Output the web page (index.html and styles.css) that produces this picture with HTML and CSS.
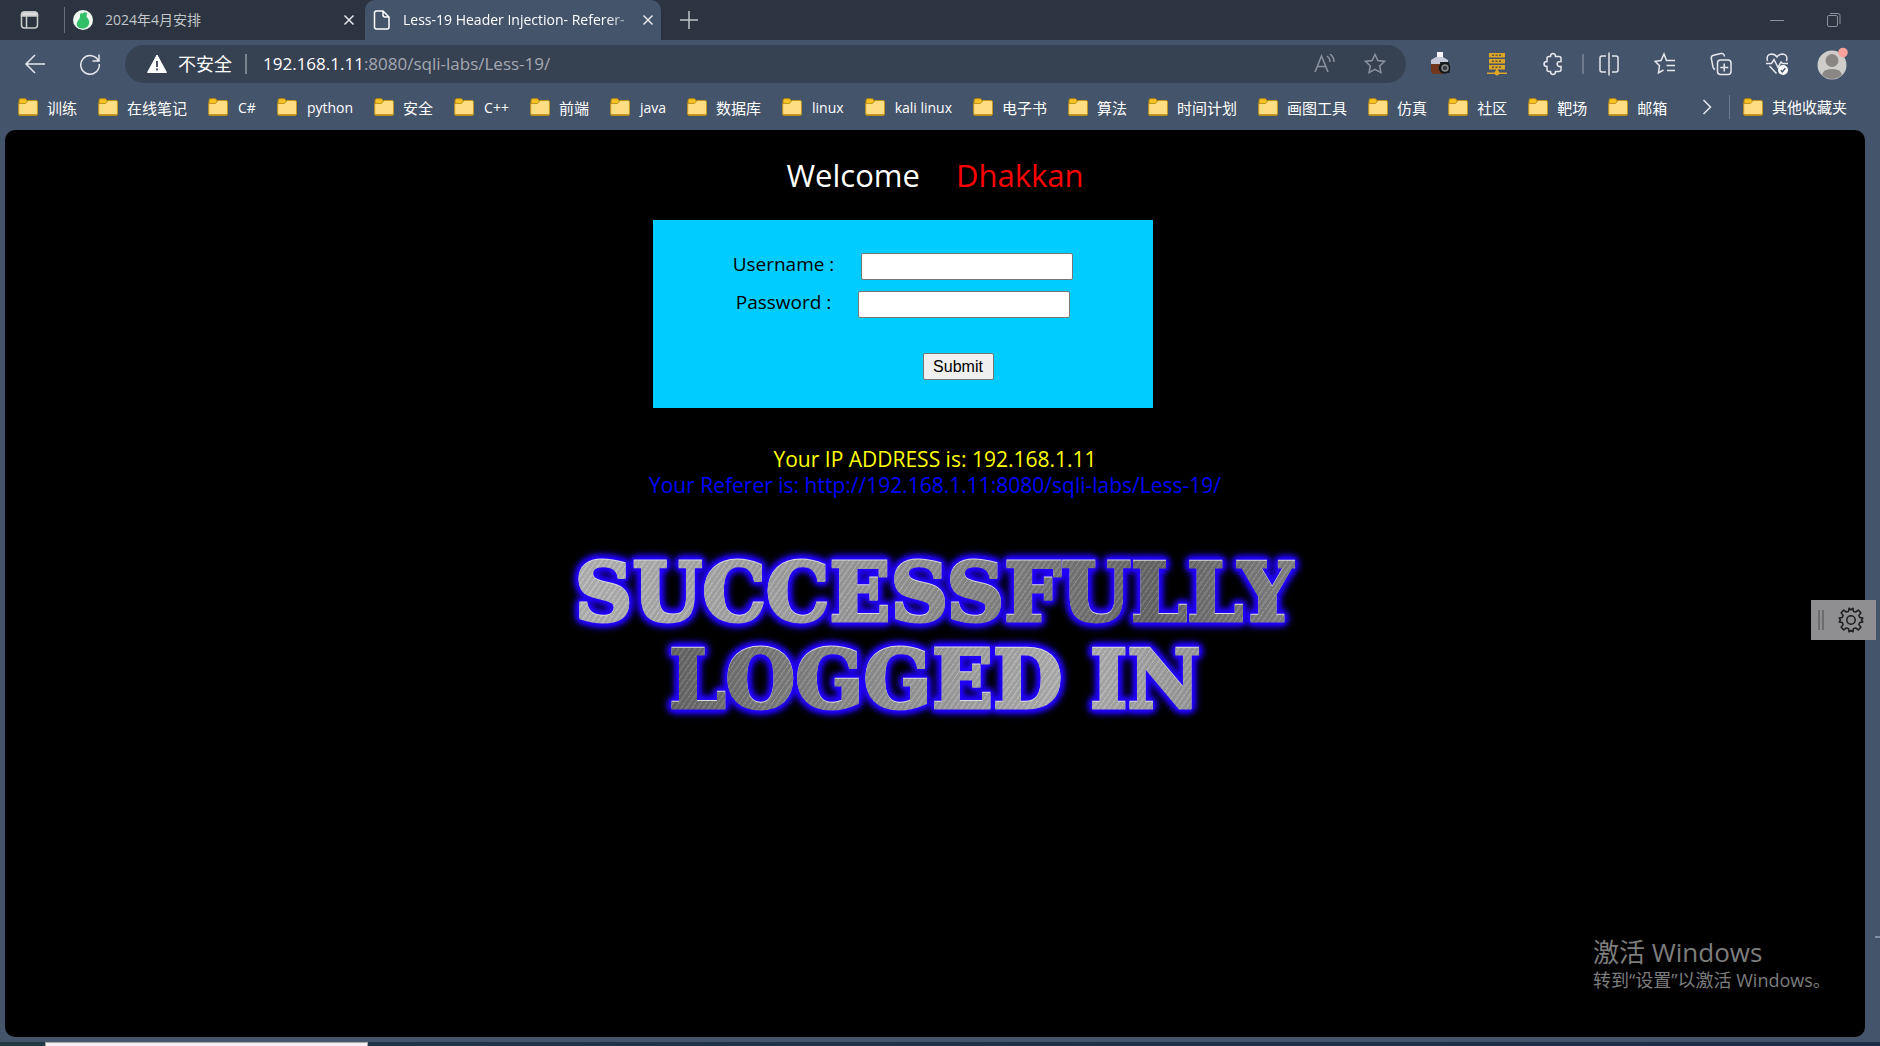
FILE: index.html
```html
<!DOCTYPE html>
<html lang="zh-CN">
<head>
<meta charset="utf-8">
<title>Less-19 Header Injection- Referer-</title>
<link rel="stylesheet" href="styles.css">
</head>
<body>
<svg class="defs" width="0" height="0" aria-hidden="true">
  <symbol id="folder" viewBox="0 0 20 18">
    <path d="M1 2.500Q1 .7 2.500 .7H7.500L9.500 3V7H1z" fill="#f5c326" stroke="#b8860b"/>
    <path d="M.7 5.500H7.500L10 2.500H18Q19.500 2.500 19.500 4V16Q19.500 17.300 18 17.300H2Q.7 17.300 .7 16z" fill="#ffdd83" stroke="#c2951f"/>
    <path d="M1 16.900H19" stroke="#b98a12" stroke-width="1.400"/>
  </symbol>
  <symbol id="cross" viewBox="0 0 12 12"><path d="M1.500 1.500l9 9M10.500 1.500l-9 9"/></symbol>
</svg>

<header class="browser">
  <div class="tabs">
    <button class="icon tab-menu" aria-label="标签页操作"><svg width="20" height="20" viewBox="0 0 20 20"><rect x="1.500" y="2" width="16" height="16" rx="3"/><path d="M1.500 6V5q0-3 3-3h10q3 0 3 3v1z" fill="#ddd"/><path d="M6.500 6v12"/></svg></button>
    <div class="tab">
      <svg class="favicon" width="20" height="20" viewBox="0 0 20 20"><circle cx="10" cy="10" r="10" fill="#eefaf0"/><path d="M7 4.500q0-2 3-1 1-2 4-.5l-.5 4q3.500 3 2.500 7-1 3-5 4.500-5 .5-7-2.500-1-3 1-5.500 2.500-2 2-6z" fill="#32bf68"/></svg>
      <span class="tab-title">2024年4月安排</span>
      <button class="icon" aria-label="关闭"><svg width="12" height="12"><use href="#cross"/></svg></button>
    </div>
    <div class="tab active">
      <svg class="favicon line" width="18" height="20" viewBox="0 0 18 20"><path d="M1.500 3q0-2 2-2H10l6 6v10q0 2-2 2H3.500q-2 0-2-2zM10 1v4q0 2 2 2h4"/></svg>
      <span class="tab-title fade">Less-19 Header Injection- Referer-</span>
      <button class="icon" aria-label="关闭"><svg width="12" height="12"><use href="#cross"/></svg></button>
    </div>
    <button class="icon new-tab" aria-label="新建标签页"><svg width="18" height="18" viewBox="0 0 18 18"><path d="M9 0v18M0 9h18"/></svg></button>
    <div class="window-controls">
      <button class="icon" aria-label="最小化"><svg width="14" height="14" viewBox="0 0 14 14"><path d="M0 7.500h14"/></svg></button>
      <button class="icon" aria-label="还原"><svg width="14" height="14" viewBox="0 0 14 14"><rect x=".5" y="2.500" width="10" height="11" rx="1.500"/><path d="M3 .5h8q2 0 2 2V11"/></svg></button>
    </div>
  </div>

  <div class="toolbar">
    <button class="icon back" aria-label="返回"><svg width="22" height="20" viewBox="0 0 22 20"><path d="M11 1L2 10l9 9M2 10h19"/></svg></button>
    <button class="icon reload" aria-label="刷新"><svg width="22" height="22" viewBox="0 0 22 22"><path d="M19.500 8A9.300 9.300 0 1 0 20.300 11M20 1.500V8h-6.500"/></svg></button>
    <div class="address">
      <svg width="20" height="20" viewBox="0 0 20 20"><path d="M10 1L19.500 18.500H.5z" fill="#fff" stroke="#fff" stroke-linejoin="round"/><path d="M10 7v6M10 14.500v2" stroke="#364152" stroke-width="1.800"/></svg>
      <span class="insecure">不安全</span>
      <span class="url"><b>192.168.1.11</b>:8080/sqli-labs/Less-19/</span>
      <button class="icon dim" aria-label="大声朗读"><svg width="22" height="20" viewBox="0 0 22 20"><path d="M1 18L7.500 2 14 18M3.500 12.500h8M13 2q3 2 3 6M16 0q4 3 4 8"/></svg></button>
      <button class="icon dim" aria-label="收藏"><svg width="22" height="22" viewBox="0 0 22 22"><path d="M11 1.500l2.900 6 6.600.9-4.800 4.600 1.200 6.600-5.900-3.200-5.900 3.200L6.300 13 1.500 8.400l6.600-.9z"/></svg></button>
    </div>
    <nav class="tools">
      <button class="icon" aria-label="截图"><svg class="solid" width="22" height="24" viewBox="0 0 22 24"><path d="M7 0h6v6H7z" fill="#f4f4fa"/><path d="M1 8l5-3h7l5 3v5H1z" fill="#c6c8d8"/><path d="M1 12h12v10H3l-2-2z" fill="#70371e"/><path d="M10 10h9l1 11h-9z" fill="#20242b"/><circle cx="14.500" cy="16" r="5.800" fill="#14171c"/><circle cx="15" cy="16" r="3" fill="#343b44" stroke="#8a8a8a"/></svg></button>
      <button class="icon" aria-label="代理"><svg class="solid" width="22" height="24" viewBox="0 0 22 24"><path d="M3 1h16v4.500H3zM3 7h16v4.500H3zM3 13h16v4.500H3zM10 17h2v3h-2zM1 20.500h20V22H1z" fill="#d9a528"/><path d="M6 3.200h9M6 9.200h9M6 15.200h9" stroke="#5b5540" stroke-dasharray="2 1.500"/><circle cx="11" cy="21" r="2.400" fill="#e0a823"/></svg></button>
      <button class="icon" aria-label="扩展"><svg width="22" height="24" viewBox="0 0 22 24"><path d="M7 4.500h1.500Q8.500 1.500 11 1.500t2.500 3H17q2 0 2 2v3q-3.800-.3-3.800 2.500T19 14.500v3q0 2-2 2h-3.500q0 3-2.500 3t-2.500-3H7q-2 0-2-2v-3Q2 14.500 2 12t3-2.500v-3q0-2 2-2z"/></svg></button>
      <button class="icon split" aria-label="分屏"><svg width="22" height="24" viewBox="0 0 22 24"><path d="M8 4H4Q2 4 2 6v12q0 2 2 2h4M14 4h4q2 0 2 2v12q0 2-2 2h-4M11 .5v23"/></svg></button>
      <button class="icon" aria-label="收藏夹"><svg width="22" height="24" viewBox="0 0 22 24"><path d="M14 8.500h-1.500L10 2 7 8.500 1.200 9.300l4.300 4.500-1 7 5-2.800M14 8.500h7M12.500 13.500H21M13 18.500h8"/></svg></button>
      <button class="icon" aria-label="集锦"><svg width="22" height="24" viewBox="0 0 22 24"><rect x="7.500" y="8" width="13.500" height="14.500" rx="3"/><path d="M14.200 11.500v8M10.300 15.500h8M5 17.500q-1.500-.5-2-2.500L1.300 6.500Q1 4 3.500 3.300L11 1.500q3-.5 3.500 3"/></svg></button>
      <button class="icon" aria-label="浏览器概要"><svg width="22" height="24" viewBox="0 0 22 24"><path d="M1.500 9Q-.2 2.500 5.500 2 9 2 11 5q2-3 5.500-3Q22.200 2.500 20.500 9M3.500 14l7 7.500M0 11.500h5.500l2.500-4 4 8 3-5.500 1.500 1.500H22"/><circle cx="17" cy="18" r="5" fill="#fff" stroke="none"/><path d="M14.800 18.300l1.500 1.500 3-3.500" stroke="#44546a"/></svg></button>
      <button class="icon profile" aria-label="个人资料"><svg class="solid" width="32" height="36" viewBox="0 0 32 36"><circle cx="15" cy="19" r="14.500" fill="#cfcdca"/><circle cx="15" cy="14.500" r="6.500" fill="#898684"/><path d="M5 29q1-6 10-6t10 6q-10 8-20 0z" fill="#898684"/><circle cx="26" cy="6.500" r="4.800" fill="#f9a19b"/></svg></button>
    </nav>
  </div>

  <nav class="bookmarks">
    <a href="#"><svg width="20" height="20"><use href="#folder"/></svg>训练</a>
    <a href="#"><svg width="20" height="20"><use href="#folder"/></svg>在线笔记</a>
    <a class="latin" href="#"><svg width="20" height="20"><use href="#folder"/></svg>C#</a>
    <a class="latin" href="#"><svg width="20" height="20"><use href="#folder"/></svg>python</a>
    <a href="#"><svg width="20" height="20"><use href="#folder"/></svg>安全</a>
    <a class="latin" href="#"><svg width="20" height="20"><use href="#folder"/></svg>C++</a>
    <a href="#"><svg width="20" height="20"><use href="#folder"/></svg>前端</a>
    <a class="latin" href="#"><svg width="20" height="20"><use href="#folder"/></svg>java</a>
    <a href="#"><svg width="20" height="20"><use href="#folder"/></svg>数据库</a>
    <a class="latin" href="#"><svg width="20" height="20"><use href="#folder"/></svg>linux</a>
    <a class="latin" href="#"><svg width="20" height="20"><use href="#folder"/></svg>kali linux</a>
    <a href="#"><svg width="20" height="20"><use href="#folder"/></svg>电子书</a>
    <a href="#"><svg width="20" height="20"><use href="#folder"/></svg>算法</a>
    <a href="#"><svg width="20" height="20"><use href="#folder"/></svg>时间计划</a>
    <a href="#"><svg width="20" height="20"><use href="#folder"/></svg>画图工具</a>
    <a href="#"><svg width="20" height="20"><use href="#folder"/></svg>仿真</a>
    <a href="#"><svg width="20" height="20"><use href="#folder"/></svg>社区</a>
    <a href="#"><svg width="20" height="20"><use href="#folder"/></svg>靶场</a>
    <a href="#"><svg width="20" height="20"><use href="#folder"/></svg>邮箱</a>
    <button class="icon more" aria-label="更多"><svg width="10" height="16" viewBox="0 0 10 16"><path d="M1.500 1l7 7-7 7"/></svg></button>
    <a class="others" href="#"><svg width="20" height="20"><use href="#folder"/></svg>其他收藏夹</a>
  </nav>
</header>

<main class="page">
  <h1 class="welcome">Welcome <span>Dhakkan</span></h1>
  <form class="login">
    <div class="field"><label for="user">Username :</label><input id="user" type="text"></div>
    <div class="field"><label for="pass">Password :</label><input id="pass" type="password"></div>
    <button class="submit" type="button">Submit</button>
  </form>
  <p class="result"><span class="ip">Your IP ADDRESS is: 192.168.1.11</span><span class="referer">Your Referer is: http://192.168.1.11:8080/sqli-labs/Less-19/</span></p>
  <div class="banner"><span>SUCCESSFULLY</span><span>LOGGED IN</span></div>
</main>
<footer class="taskbar"><div class="task"></div></footer>

<button class="gear" aria-label="设置"><i class="grip"></i><svg width="26" height="26" viewBox="0 0 26 26"><path d="M10.600 4.200L11 1.200l2 1.600 2-1.600.4 3 2.200.9 2.600-2 2.700 2.700-2 2.600.9 2.200 3 .4-1.300 2 1.300 2-3 .4-.9 2.200 2 2.600-2.700 2.700-2.600-2-2.200.9-.4 3-2-1.500-2 1.500-.4-3-2.200-.9-2.600 2-2.700-2.700 2-2.600-.9-2.200-3-.4 1.300-2-1.300-2 3-.4.9-2.200-2-2.600 2.700-2.700 2.600 2z"/><circle cx="13" cy="13" r="4.200"/></svg></button>
<i class="edge-mark"></i>
<aside class="activate"><strong>激活 Windows</strong><span>转到“设置”以激活 Windows。</span></aside>
</body>
</html>
```
FILE: styles.css
```css
* { box-sizing: border-box; }

body {
  margin: 0;
  min-height: 100vh;
  position: relative;
  display: flex;
  flex-direction: column;
  background: #44546a;
  color: #fff;
  font-family: "Open Sans", "Noto Sans CJK SC", sans-serif;
  overflow-x: hidden;
}

.defs { position: absolute; }
svg { flex: none; display: block; }

.icon {
  display: flex;
  align-items: center;
  justify-content: center;
  flex: none;
  padding: 0;
  border: 0;
  background: none;
  color: #e6e8ec;
}
.icon svg, .line { fill: none; stroke: currentColor; stroke-width: 1.5; }
.icon svg.solid { stroke: none; }

/* Tab strip */
.tabs {
  display: flex;
  height: 40px;
  background: #2b3440;
  font-size: 14px;
}
.tab-menu { width: 64px; padding-right: 4px; color: #ccc; }
.tab {
  display: flex;
  align-items: center;
  width: 301px;
  padding: 0 10px 0 8px;
  border-left: 1px solid;
  border-image: linear-gradient(transparent 20%, #65707d 20% 80%, transparent 80%) 1;
  color: #c3c6ca;
}
.tab.active {
  width: 296px;
  padding: 0 7px 0 8px;
  border: 0;
  border-radius: 10px 10px 0 0;
  background: #44546a;
  color: #fff;
}
.tab-title { flex: 1; margin-left: 12px; padding-bottom: 2px; white-space: nowrap; overflow: hidden; }
.fade { mask-image: linear-gradient(90deg, #000 85%, transparent); }
.new-tab { width: 56px; color: #bfc3c8; }
.window-controls { display: flex; margin-left: auto; padding-right: 18px; }
.window-controls .icon { width: 57px; color: #8c929b; }
.window-controls svg { stroke-width: 1; }

/* Address row */
.toolbar {
  display: flex;
  align-items: center;
  height: 48px;
  padding: 0 36px 0 24px;
}
.back { width: 22px; }
.reload { width: 22px; margin: 0 24px 0 33px; }
.address {
  display: flex;
  align-items: center;
  flex: 1;
  height: 38px;
  padding: 0 20px 0 22px;
  border-radius: 19px;
  background: #364152;
  font-size: 17px;
}
.insecure {
  margin-left: 11px;
  padding-right: 13px;
  border-right: 2px solid #7c8490;
  font-size: 18px;
  line-height: 20px;
}
.url { margin: 0 auto 0 16px; padding-bottom: 2px; color: #a4a9b1; }
.url b { color: #fff; font-weight: 400; }
.address .icon { width: 22px; margin-left: 28px; }
.address .dim { color: #8c939e; }
.tools { display: flex; align-items: center; gap: 34px; margin-left: 24px; }
.tools .icon { width: 22px; height: 36px; }
.tools .split {
  width: 40px;
  margin-left: -18px;
  padding-left: 18px;
  background: linear-gradient(#6f7b8c, #6f7b8c) 2px 50% / 2px 20px no-repeat;
}

/* Bookmarks row */
.bookmarks {
  display: flex;
  align-items: center;
  gap: 20px;
  height: 42px;
  padding: 0 32px 4px 18px;
  font-size: 15px;
  white-space: nowrap;
}
.bookmarks a {
  display: flex;
  align-items: center;
  gap: 9px;
  padding-right: 1px;
  color: #fff;
  text-decoration: none;
}
.bookmarks .latin { gap: 10px; font-size: 14px; }
.more { margin-left: auto; }
.bookmarks .others {
  margin-left: -3px;
  padding-left: 13px;
  border-left: 1px solid #6f7b8c;
  line-height: 24px;
}

/* Web page */
.page {
  flex: 1;
  margin: 0 15px 5px 5px;
  padding: 23px 0 40px;
  border-radius: 10px;
  background: #000;
  display: flex;
  flex-direction: column;
  align-items: center;
}
.welcome {
  display: flex;
  gap: 36px;
  margin: 0;
  font-size: 31px;
  font-weight: 400;
  line-height: 44px;
}
.welcome span { color: #f00; }
.login {
  display: flex;
  flex-direction: column;
  align-items: center;
  width: 500px;
  height: 188px;
  margin: 23px 64px 0 0;
  padding-top: 33px;
  background: #0cf;
  color: #000;
  font-size: 19px;
}
.field { display: flex; gap: 27px; height: 38px; }
.field label { line-height: 22px; }
.field input {
  width: 212px;
  height: 27px;
  border: 1px solid #767676;
  border-radius: 2px;
  background: #fff;
}
.submit {
  width: 71px;
  height: 27px;
  margin: 24px 0 0 110px;
  padding: 0;
  border: 1px solid #767676;
  border-radius: 2px;
  background: #efefef;
  color: #000;
  font: 16px "Liberation Sans", Arial, sans-serif;
}
.result {
  display: flex;
  flex-direction: column;
  align-items: center;
  margin: 38px 0 0;
  font-size: 21px;
  line-height: 26px;
}
.ip { color: #ff0; }
.referer { color: #00f; }
.banner {
  display: flex;
  flex-direction: column;
  align-items: center;
  margin-top: 52px;
  font: bold 80px/87px "DejaVu Serif", serif;
  white-space: nowrap;
  filter: drop-shadow(0 -1px 0 #ddd) drop-shadow(0 0 1px #20f) drop-shadow(0 0 3px #20f) drop-shadow(0 0 3px #20f) drop-shadow(0 0 2px #20f);
}
.banner span {
  background:
    repeating-linear-gradient(125deg, #fff1 0 2px, #0001 2px 5px, #fff2 5px 6px, #0001 6px 9px),
    linear-gradient(100deg, #b8b8b8, #999 45%, #686868 80%, #888);
  background-clip: text;
  color: transparent;
  -webkit-text-stroke: 3px transparent;
}
.banner span + span {
  background-image:
    repeating-linear-gradient(125deg, #fff1 0 2px, #0001 2px 5px, #fff2 5px 6px, #0001 6px 9px),
    linear-gradient(100deg, #666, #999 45%, #b5b5b5 75%, #999);
}

/* Strip of the desktop below the window */
.taskbar { height: 4px; padding-left: 45px; background: linear-gradient(90deg, #213845, #1c2b48); }
.task { width: 323px; height: 4px; border: 1px solid #aaa; border-bottom: 0; background: #f2f0f2; }

/* Desktop overlays */
.gear {
  position: absolute;
  top: 600px;
  right: 4px;
  display: flex;
  align-items: center;
  justify-content: space-between;
  width: 65px;
  height: 40px;
  padding: 0 12px 0 7px;
  border: 0;
  background: #8f8f91;
}
.gear svg { fill: none; stroke: #1d1d1f; stroke-width: 1.5; stroke-linejoin: round; }
.grip { width: 6px; height: 20px; border: solid #6c6c6e; border-width: 0 2px; }
.edge-mark { position: absolute; right: 0; top: 936px; width: 5px; height: 2px; background: #8290a3; }
.activate {
  position: absolute;
  right: 47px;
  bottom: 54px;
  width: 240px;
  display: flex;
  flex-direction: column;
  color: #7d7d7d;
  font-size: 18px;
  line-height: 24px;
  white-space: nowrap;
}
.activate strong { font-size: 26px; font-weight: 400; line-height: 32px; }
```
